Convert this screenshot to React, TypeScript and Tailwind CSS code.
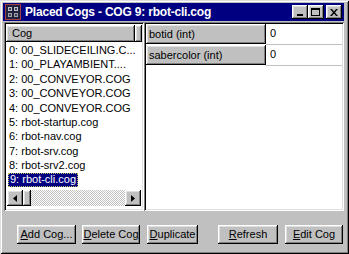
import { ReactNode } from 'react';

const raised =
  'shadow-[inset_-1px_-1px_#000,inset_1px_1px_#fff,inset_-2px_-2px_#808080,inset_2px_2px_#dfdfdf]';
const sunken =
  'shadow-[inset_1px_1px_#808080,inset_-1px_-1px_#fff,inset_2px_2px_#000,inset_-2px_-2px_#dfdfdf]';

const cogs = [
  '0: 00_SLIDECEILING.C...',
  '1: 00_PLAYAMBIENT....',
  '2: 00_CONVEYOR.COG',
  '3: 00_CONVEYOR.COG',
  '4: 00_CONVEYOR.COG',
  '5: rbot-startup.cog',
  '6: rbot-nav.cog',
  '7: rbot-srv.cog',
  '8: rbot-srv2.cog',
  '9: rbot-cli.cog',
];

const params = [
  { name: 'botid (int)', value: '0' },
  { name: 'sabercolor (int)', value: '0' },
];

function TitleButton({ children }: { children: ReactNode }) {
  return (
    <div className={`w-[16px] h-[14px] bg-[#c0c0c0] ${raised} flex items-center justify-center`}>
      {children}
    </div>
  );
}

function Btn({ hot, rest, className }: { hot: string; rest: string; className: string }) {
  return (
    <div
      className={`h-[19px] bg-[#c0c0c0] ${raised} flex items-center justify-center text-[11px] text-black ${className}`}
    >
      <span className="underline underline-offset-[1px]">{hot}</span>
      {rest}
    </div>
  );
}

export default function App() {
  return (
    <div
      className="w-[349px] h-[254px] bg-[#c0c0c0] pl-[3px] pr-[5px] pt-[3px] flex flex-col shadow-[inset_1px_1px_#dfdfdf,inset_-1px_-1px_#000,inset_2px_2px_#fff,inset_-2px_-2px_#808080] overflow-hidden"
      style={{ fontFamily: '"Liberation Sans", Arial, sans-serif' }}
    >
      {/* Title bar */}
      <div className="h-[18px] bg-[#000080] flex items-center pl-[2px] pr-[2px]">
        <svg width="16" height="16" viewBox="0 0 16 16" className="shrink-0">
          <rect x="0.5" y="0.5" width="15" height="15" fill="#202040" stroke="#a04040" />
          <rect x="3" y="3" width="4" height="4" fill="#c0c0c0" />
          <rect x="9" y="3" width="4" height="4" fill="#c0c0c0" />
          <rect x="4" y="4" width="2" height="2" fill="#404060" />
          <rect x="10" y="4" width="2" height="2" fill="#404060" />
          <rect x="3" y="9" width="4" height="4" fill="#a0a0a0" />
          <rect x="9" y="9" width="4" height="4" fill="#a0a0a0" />
          <rect x="4" y="10" width="2" height="2" fill="#404060" />
          <rect x="10" y="10" width="2" height="2" fill="#404060" />
        </svg>
        <span className="ml-[4px] text-white font-bold text-[12px] tracking-[-0.2px] whitespace-nowrap">
          Placed Cogs - COG 9: rbot-cli.cog
        </span>
        <div className="ml-auto flex items-center">
          <TitleButton>
            <div className="w-[6px] h-[2px] bg-black mt-[6px] -ml-[1px]" />
          </TitleButton>
          <TitleButton>
            <div className="w-[9px] h-[8px] border border-black border-t-2 -ml-[1px]" />
          </TitleButton>
          <div className="ml-[2px]">
            <TitleButton>
              <svg width="8" height="7" viewBox="0 0 8 7" className="-ml-[1px]">
                <path d="M0 0h2l2 2.5L6 0h2L5 3.5 8 7H6L4 4.5 2 7H0l3-3.5z" fill="#000" />
              </svg>
            </TitleButton>
          </div>
        </div>
      </div>

      {/* Panels */}
      <div className="flex mt-[1px] h-[189px] pl-[1px]">
        {/* Cog list */}
        <div className={`w-[140px] h-full bg-white ${sunken} p-[2px] flex flex-col`}>
          <div className="flex h-[17px] mt-[1px]">
            <div className={`w-[129px] h-full bg-[#c0c0c0] ${raised} text-[11px] text-black flex items-center pl-[6px]`}>
              Cog
            </div>
            <div className={`flex-1 h-full bg-[#c0c0c0] ${raised}`} />
          </div>
          <div className="flex-1 flex flex-col pt-[1px]">
            {cogs.map((c, i) => (
              <div key={i} className="h-[14.4px] flex items-center text-[11px] text-black whitespace-nowrap">
                {i === 9 ? (
                  <span className="ml-[2px] px-[1px] h-[14px] flex items-center bg-[#000080] text-white border border-dotted border-[#c0c060]">
                    {c}
                  </span>
                ) : (
                  <span className="ml-[3px]">{c}</span>
                )}
              </div>
            ))}
          </div>
          {/* Horizontal scrollbar */}
          <div className="h-[16px] mx-[1px] mb-[3px] flex">
            <div className={`w-[16px] h-full bg-[#c0c0c0] ${raised} flex items-center justify-center`}>
              <svg width="4" height="7" viewBox="0 0 4 7">
                <path d="M4 0v7L0 3.5z" fill="#000" />
              </svg>
            </div>
            <div className={`w-[8px] h-full bg-[#c0c0c0] ${raised}`} />
            <div className="flex-1 h-full bg-[repeating-conic-gradient(#c0c0c0_0_25%,#fff_0_50%)] bg-[length:2px_2px]" />
            <div className={`w-[16px] h-full bg-[#c0c0c0] ${raised} flex items-center justify-center`}>
              <svg width="4" height="7" viewBox="0 0 4 7">
                <path d="M0 0v7l4-3.5z" fill="#000" />
              </svg>
            </div>
          </div>
        </div>

        {/* Parameters grid */}
        <div className={`w-[200px] h-full bg-white ${sunken} p-[2px] flex flex-col`}>
          {params.map((p) => (
            <div key={p.name} className="flex h-[21px]">
              <div className={`w-[120px] h-[20px] bg-[#c0c0c0] ${raised} text-[11px] text-black flex items-center pl-[3px]`}>
                {p.name}
              </div>
              <div className="flex-1 h-[21px] border-b border-[#c0c0c0] text-[11px] text-black flex items-center pl-[4px] pb-[1px]">
                {p.value}
              </div>
            </div>
          ))}
        </div>
      </div>

      {/* Buttons */}
      <div className="flex mt-[14px]">
        <Btn hot="A" rest="dd Cog..." className="w-[59px] ml-[14px]" />
        <Btn hot="D" rest="elete Cog" className="w-[58px] ml-[6px]" />
        <Btn hot="D" rest="uplicate" className="w-[51px] ml-[7px]" />
        <Btn hot="R" rest="efresh" className="w-[60px] ml-[20px]" />
        <Btn hot="E" rest="dit Cog" className="w-[58px] ml-[7px]" />
      </div>
    </div>
  );
}
